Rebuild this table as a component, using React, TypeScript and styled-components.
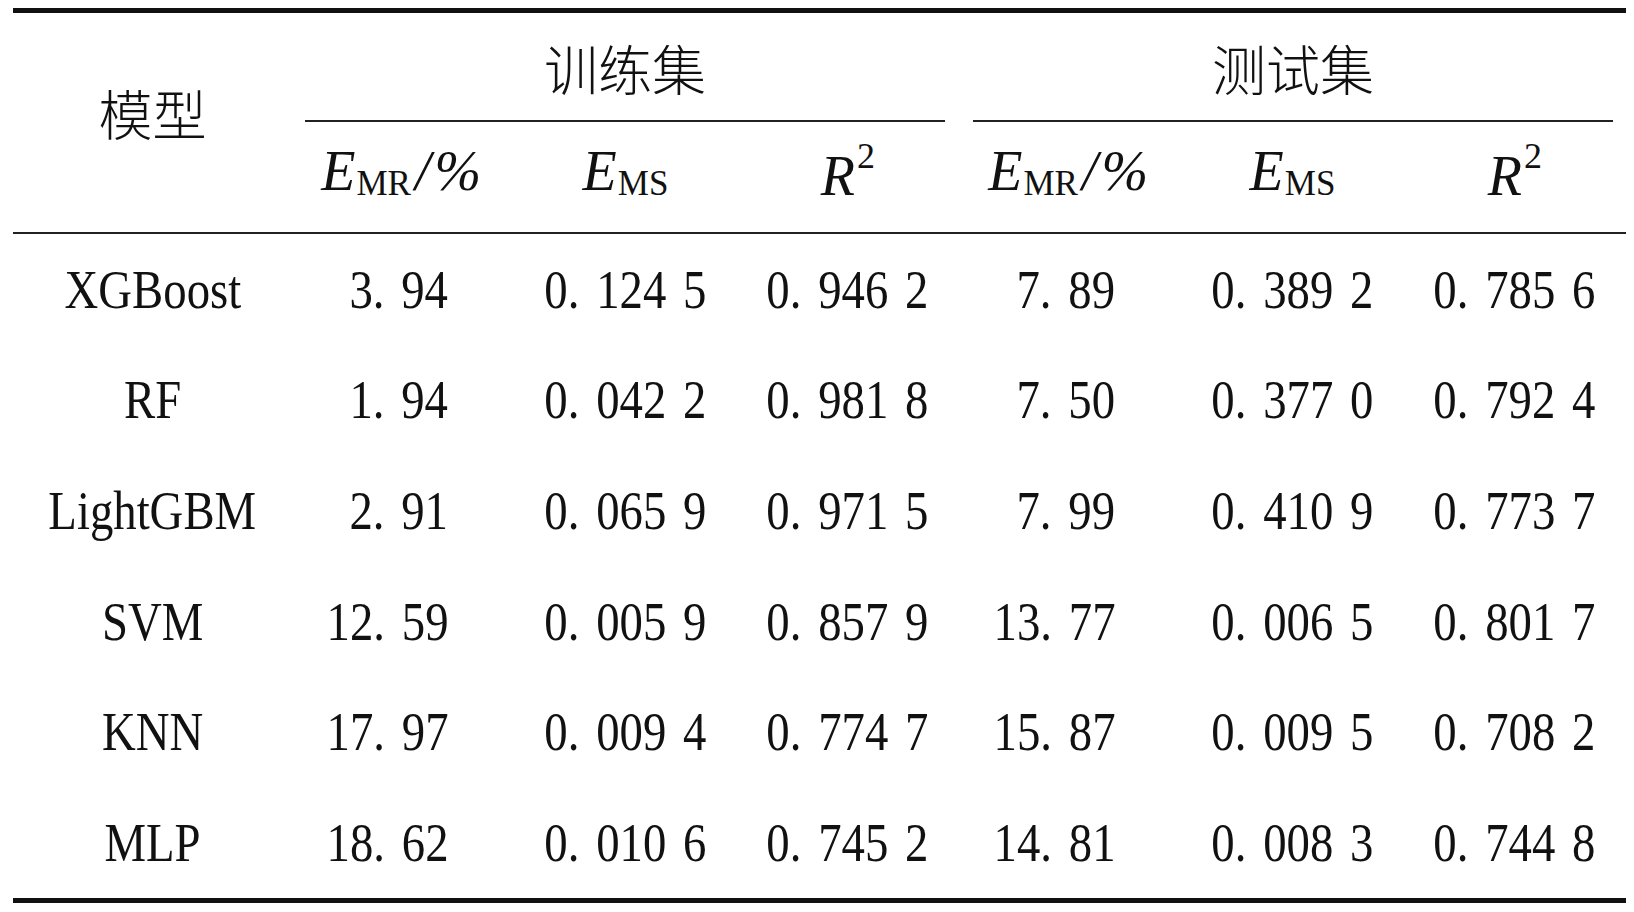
import styled, { createGlobalStyle } from 'styled-components';

type Row = {
  model: string;
  train: [string, string, string];
  test: [string, string, string];
};

const rows: Row[] = [
  { model: 'XGBoost', train: ['3.94', '0.1245', '0.9462'], test: ['7.89', '0.3892', '0.7856'] },
  { model: 'RF', train: ['1.94', '0.0422', '0.9818'], test: ['7.50', '0.3770', '0.7924'] },
  { model: 'LightGBM', train: ['2.91', '0.0659', '0.9715'], test: ['7.99', '0.4109', '0.7737'] },
  { model: 'SVM', train: ['12.59', '0.0059', '0.8579'], test: ['13.77', '0.0065', '0.8017'] },
  { model: 'KNN', train: ['17.97', '0.0094', '0.7747'], test: ['15.87', '0.0095', '0.7082'] },
  { model: 'MLP', train: ['18.62', '0.0106', '0.7452'], test: ['14.81', '0.0083', '0.7448'] },
];

// journal style: "0.1245" -> "0. 124 5"
const fmt = (v: string) => {
  const [int, frac] = v.split('.');
  const groups = frac.match(/.{1,3}/g) ?? [];
  return `${int}. ${groups.join(' ')}`;
};

const GlobalStyle = createGlobalStyle`
  html, body {
    margin: 0;
    padding: 0;
    background: #fff;
  }
  body {
    font-family: 'Liberation Serif', 'Times New Roman', serif;
    color: #111;
  }
`;

const Page = styled.div`
  width: 1634px;
  height: 912px;
  box-sizing: border-box;
  padding: 8px 0 0 13px;
  background: #fff;
`;

const Table = styled.div`
  width: 1613px;
  border-top: 5px solid #111;
  border-bottom: 5px solid #111;
`;

const Head = styled.div`
  display: grid;
  grid-template-columns: 279px repeat(6, 1fr);
  grid-template-rows: 109px 110px;
  border-bottom: 2px solid #222;
`;

const CjkText = styled.div`
  font-family: 'Noto Sans CJK SC', 'Liberation Serif', serif;
  font-weight: 300;
  font-size: 54px;
  line-height: 1;
`;

const ModelHead = styled(CjkText)`
  grid-column: 1;
  grid-row: 1 / 3;
  display: flex;
  align-items: center;
  justify-content: center;
  padding-bottom: 20px;
`;

const GroupHead = styled(CjkText)<{ $first?: boolean }>`
  grid-column: span 3;
  grid-row: 1;
  display: flex;
  align-items: center;
  justify-content: center;
  box-sizing: border-box;
  margin: ${(p) => (p.$first ? '0 14px 0 13px' : '0 13px 0 14px')};
  border-bottom: 2px solid #222;
  padding-top: 2px;
`;

const ColHead = styled.div<{ $lift?: number }>`
  grid-row: 2;
  display: flex;
  align-items: center;
  justify-content: center;
  font-size: 56px;
  line-height: 1;
  white-space: nowrap;
  padding-bottom: ${(p) => p.$lift ?? 12}px;
`;

const Ital = styled.span`
  font-style: italic;
`;

const Sub = styled.span`
  font-size: 35px;
  position: relative;
  top: 13px;
  line-height: 0;
  margin-left: 1px;
`;

const Sup = styled.span`
  font-size: 36px;
  position: relative;
  top: -20px;
  line-height: 0;
  margin-left: 2px;
`;

const Unit = styled.span`
  font-style: italic;
  margin-left: 4px;
  letter-spacing: 4px;
`;

const Body = styled.div`
  display: grid;
  grid-template-columns: 279px repeat(6, 1fr);
  grid-template-rows: repeat(6, 1fr);
  height: 664px;
`;

const Cell = styled.div<{ $right?: boolean }>`
  display: flex;
  align-items: center;
  justify-content: ${(p) => (p.$right ? 'flex-end' : 'center')};
  padding-right: ${(p) => (p.$right ? '66px' : '0')};
  font-size: 55px;
  line-height: 1;
`;

const Narrow = styled.span<{ $right?: boolean }>`
  display: inline-block;
  white-space: pre;
  word-spacing: 6px;
  transform: scaleX(0.85);
  transform-origin: ${(p) => (p.$right ? 'right' : 'center')} center;
`;

function ErrHead() {
  return (
    <>
      <Ital>E</Ital>
      <Sub>MR</Sub>
      <Unit>/%</Unit>
    </>
  );
}

function MseHead() {
  return (
    <>
      <Ital>E</Ital>
      <Sub>MS</Sub>
    </>
  );
}

function R2Head() {
  return (
    <>
      <Ital>R</Ital>
      <Sup>2</Sup>
    </>
  );
}

function Values({ vals }: { vals: [string, string, string] }) {
  return (
    <>
      <Cell $right>
        <Narrow $right>{fmt(vals[0])}</Narrow>
      </Cell>
      <Cell>
        <Narrow>{fmt(vals[1])}</Narrow>
      </Cell>
      <Cell>
        <Narrow>{fmt(vals[2])}</Narrow>
      </Cell>
    </>
  );
}

export default function App() {
  return (
    <Page>
      <GlobalStyle />
      <Table>
        <Head>
          <ModelHead>模型</ModelHead>
          <GroupHead $first>训练集</GroupHead>
          <GroupHead>测试集</GroupHead>
          <ColHead>
            <ErrHead />
          </ColHead>
          <ColHead>
            <MseHead />
          </ColHead>
          <ColHead $lift={2}>
            <R2Head />
          </ColHead>
          <ColHead>
            <ErrHead />
          </ColHead>
          <ColHead>
            <MseHead />
          </ColHead>
          <ColHead $lift={2}>
            <R2Head />
          </ColHead>
        </Head>
        <Body>
          {rows.map((r) => (
            <>
              <Cell key={`m-${r.model}`}>
                <Narrow>{r.model}</Narrow>
              </Cell>
              <Values key={`tr-${r.model}`} vals={r.train} />
              <Values key={`te-${r.model}`} vals={r.test} />
            </>
          ))}
        </Body>
      </Table>
    </Page>
  );
}
